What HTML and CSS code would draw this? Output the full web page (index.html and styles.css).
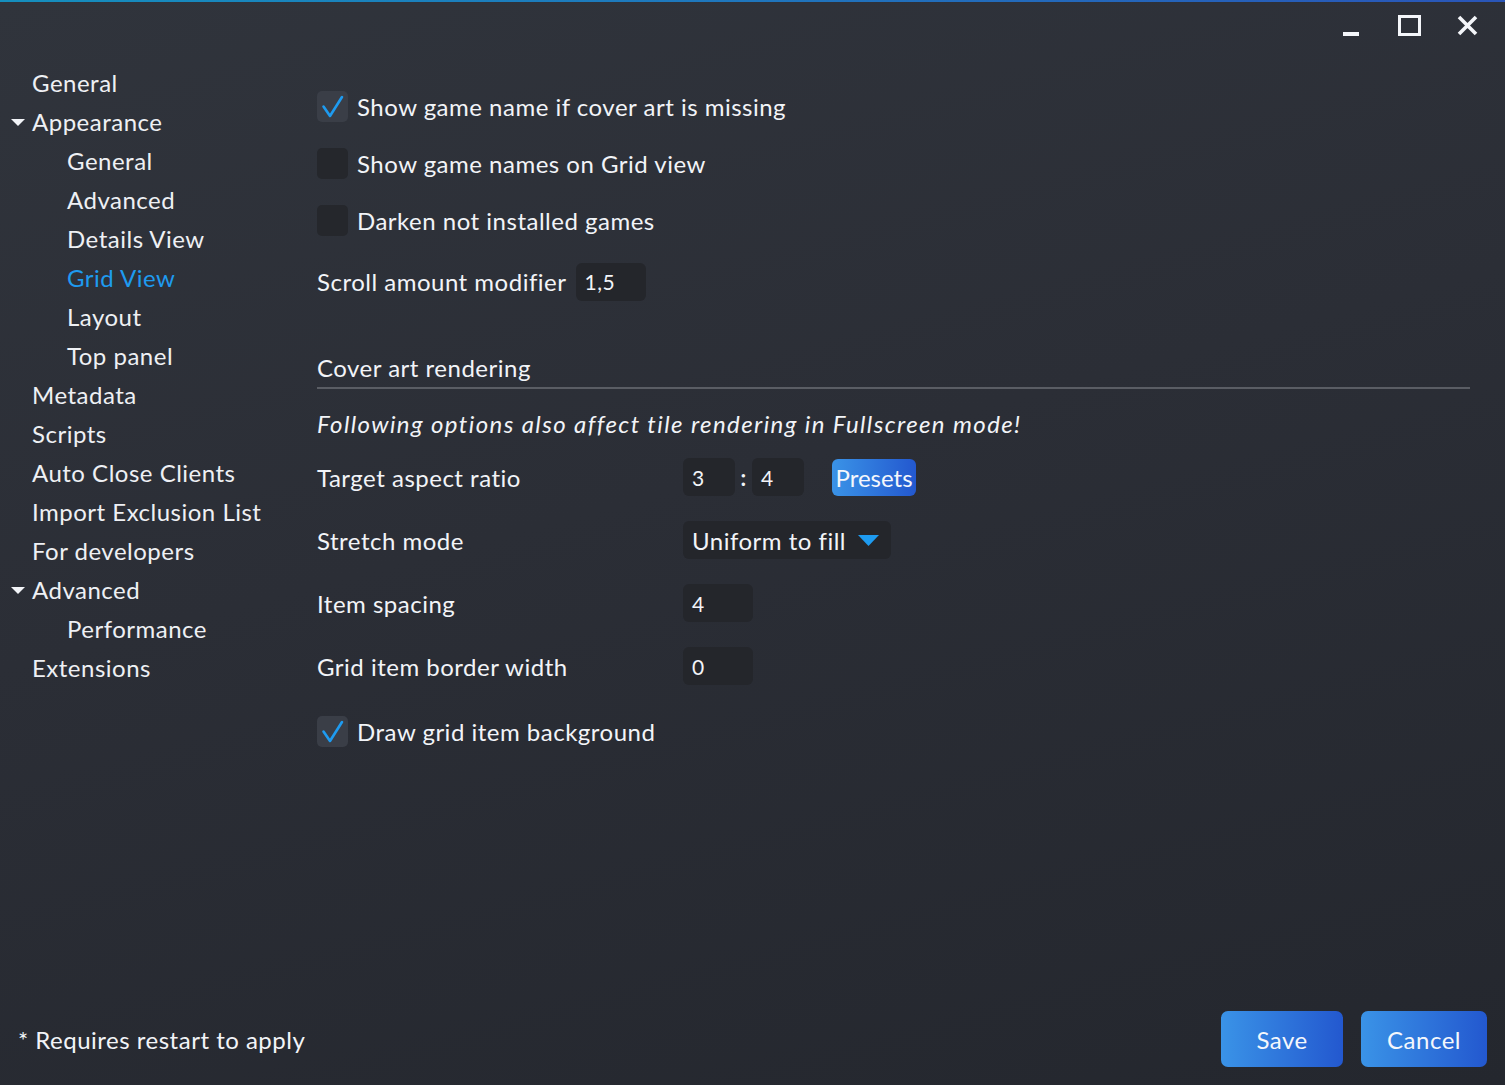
FILE: index.html
```html
<!DOCTYPE html>
<html lang="en">
<head>
<meta charset="utf-8">
<title>Settings</title>
<link rel="stylesheet" href="styles.css">
</head>
<body>
<div class="window">
  <div class="titlebar">
    <span class="tb-btn tb-min"><svg width="16" height="4" viewBox="0 0 16 4"><rect x="0" y="0" width="16" height="4" fill="#f4f6fa"/></svg></span>
    <span class="tb-btn tb-max"><svg width="23" height="21" viewBox="0 0 23 21"><rect x="1.5" y="1.5" width="20" height="18" fill="none" stroke="#f4f6fa" stroke-width="3"/></svg></span>
    <span class="tb-btn tb-close"><svg width="21" height="21" viewBox="0 0 21 21"><path d="M2 2 L19 19 M19 2 L2 19" stroke="#f4f6fa" stroke-width="3.6" fill="none"/></svg></span>
  </div>
  <div class="main">
    <nav class="sidebar">
      <div class="nav-item">General</div>
      <div class="nav-item expand"><span class="arrow"></span>Appearance</div>
      <div class="nav-item sub">General</div>
      <div class="nav-item sub">Advanced</div>
      <div class="nav-item sub">Details View</div>
      <div class="nav-item sub active">Grid View</div>
      <div class="nav-item sub">Layout</div>
      <div class="nav-item sub">Top panel</div>
      <div class="nav-item">Metadata</div>
      <div class="nav-item">Scripts</div>
      <div class="nav-item">Auto Close Clients</div>
      <div class="nav-item">Import Exclusion List</div>
      <div class="nav-item">For developers</div>
      <div class="nav-item expand"><span class="arrow"></span>Advanced</div>
      <div class="nav-item sub">Performance</div>
      <div class="nav-item">Extensions</div>
    </nav>
    <section class="content">
      <label class="check-row first">
        <span class="checkbox checked"><svg width="31" height="31" viewBox="0 0 31 31"><path d="M6.5 15.5 L13 25 L25 6" stroke="#1e9bf0" stroke-width="2.6" fill="none" stroke-linecap="round" stroke-linejoin="round"/></svg></span>
        <span class="check-label">Show game name if cover art is missing</span>
      </label>
      <label class="check-row">
        <span class="checkbox"></span>
        <span class="check-label">Show game names on Grid view</span>
      </label>
      <label class="check-row">
        <span class="checkbox"></span>
        <span class="check-label">Darken not installed games</span>
      </label>
      <div class="scroll-row">
        <span class="label">Scroll amount modifier</span>
        <span class="input w70">1,5</span>
      </div>

      <div class="section-head">Cover art rendering</div>
      <div class="note">Following options also affect tile rendering in Fullscreen mode!</div>

      <div class="form-grid">
        <span class="label">Target aspect ratio</span>
        <div class="field-row">
          <span class="input w52">3</span>
          <span class="colon">:</span>
          <span class="input w52">4</span>
          <span class="btn-presets">Presets</span>
        </div>
        <span class="label">Stretch mode</span>
        <div class="field-row">
          <span class="combo">Uniform to fill<svg class="combo-arrow" width="21" height="11" viewBox="0 0 21 11"><path d="M0 0 H21 L10.5 11 Z" fill="#1e9bf0"/></svg></span>
        </div>
        <span class="label">Item spacing</span>
        <div class="field-row"><span class="input w70">4</span></div>
        <span class="label">Grid item border width</span>
        <div class="field-row"><span class="input w70">0</span></div>
      </div>

      <label class="check-row last">
        <span class="checkbox checked"><svg width="31" height="31" viewBox="0 0 31 31"><path d="M6.5 15.5 L13 25 L25 6" stroke="#1e9bf0" stroke-width="2.6" fill="none" stroke-linecap="round" stroke-linejoin="round"/></svg></span>
        <span class="check-label">Draw grid item background</span>
      </label>
    </section>
  </div>
  <footer class="footer">
    <span class="footnote">* Requires restart to apply</span>
    <div class="actions">
      <span class="btn save">Save</span>
      <span class="btn cancel">Cancel</span>
    </div>
  </footer>
</div>
</body>
</html>
```

FILE: styles.css
```css
html, body {
  margin: 0;
  padding: 0;
  height: 100%;
}
body {
  font-family: "Lato", "Open Sans", sans-serif;
  font-size: 24px;
  letter-spacing: 0.5px;
  color: #f2f4f8;
  background: #2a2d35;
  overflow: hidden;
}
.window {
  height: 1085px;
  box-sizing: border-box;
  display: flex;
  flex-direction: column;
  background: linear-gradient(165deg, #30343c 0%, #2b2e36 45%, #24272e 100%);
  position: relative;
}
.window::before {
  content: "";
  position: absolute;
  left: 0; right: 0; top: 0;
  height: 2px;
  background: linear-gradient(90deg, #158fbe 0%, #1f76bd 50%, #2a55b8 100%);
}
.titlebar {
  height: 63px;
  flex: none;
  display: flex;
  justify-content: flex-end;
  align-items: flex-start;
  padding-right: 27px;
  box-sizing: border-box;
}
.tb-btn {
  display: flex;
  align-items: center;
  justify-content: center;
}
.tb-min { margin-top: 32px; margin-right: 39px; }
.tb-max { margin-top: 15px; margin-right: 36px; }
.tb-close { margin-top: 15px; }

.main {
  flex: 1;
  display: flex;
  min-height: 0;
}
.sidebar {
  width: 317px;
  flex: none;
  display: flex;
  flex-direction: column;
}
.nav-item {
  height: 39px;
  line-height: 39px;
  padding-left: 32px;
  position: relative;
  white-space: nowrap;
  color: #eef0f4;
}
.nav-item.sub { padding-left: 67px; }
.nav-item.active { color: #1e9bf0; }
.arrow {
  position: absolute;
  left: 11px;
  top: 17px;
  width: 0; height: 0;
  border-left: 7.5px solid transparent;
  border-right: 7.5px solid transparent;
  border-top: 7px solid #f2f4f8;
}

.content {
  flex: 1;
  padding-right: 35px;
  display: flex;
  flex-direction: column;
}
.check-row {
  display: flex;
  align-items: center;
  height: 31px;
  margin-top: 26px;
}
.check-row.first { margin-top: 28px; }
.checkbox {
  width: 31px;
  height: 31px;
  border-radius: 5px;
  background: #25272c;
  flex: none;
  display: block;
}
.checkbox.checked { background: #3a3e47; }
.checkbox svg { display: block; }
.check-label { margin-left: 9px; white-space: nowrap; }

.scroll-row {
  display: flex;
  align-items: center;
  margin-top: 26px;
  height: 39px;
}
.scroll-row .label { margin-right: 9px; }
.input {
  display: flex;
  align-items: center;
  height: 38px;
  box-sizing: border-box;
  padding-left: 9px;
  border-radius: 6px;
  background: #24262b;
  font-size: 21px;
  color: #f2f4f8;
}
.w70 { width: 70px; }
.w52 { width: 52px; }

.section-head {
  margin-top: 51px;
  padding-bottom: 3px;
  line-height: 32px;
  border-bottom: 2px solid #5a5d64;
}
.note {
  font-style: italic;
  letter-spacing: 1.4px;
  margin-top: 19px;
  line-height: 32px;
}

.form-grid {
  display: grid;
  grid-template-columns: 366px auto;
  row-gap: 25px;
  margin-top: 18px;
  align-items: center;
}
.field-row {
  display: flex;
  align-items: center;
}
.colon {
  width: 17px;
  text-align: center;
  font-size: 22px;
  font-weight: bold;
}
.btn-presets {
  margin-left: 28px;
  height: 37px;
  width: 84px;
  border-radius: 6px;
  background: linear-gradient(90deg, #3a93e7 0%, #2358cf 100%);
  display: flex;
  align-items: center;
  justify-content: center;
  color: #f4f7fc;
  letter-spacing: 0;
}
.combo {
  display: flex;
  align-items: center;
  height: 38px;
  width: 208px;
  box-sizing: border-box;
  padding-left: 9px;
  border-radius: 6px;
  background: #24262b;
}
.combo-arrow { margin-left: 12px; }
.check-row.last { margin-top: 31px; }

.footer {
  flex: none;
  display: flex;
  justify-content: space-between;
  align-items: center;
  padding: 0 18px 18px 18px;
}
.footnote { white-space: nowrap; }
.actions {
  display: flex;
  gap: 18px;
}
.btn {
  height: 56px;
  border-radius: 7px;
  background: linear-gradient(90deg, #3a93e7 0%, #2358cf 100%);
  display: flex;
  align-items: center;
  justify-content: center;
  color: #f4f7fc;
}
.btn.save { width: 122px; }
.btn.cancel { width: 126px; }
```
